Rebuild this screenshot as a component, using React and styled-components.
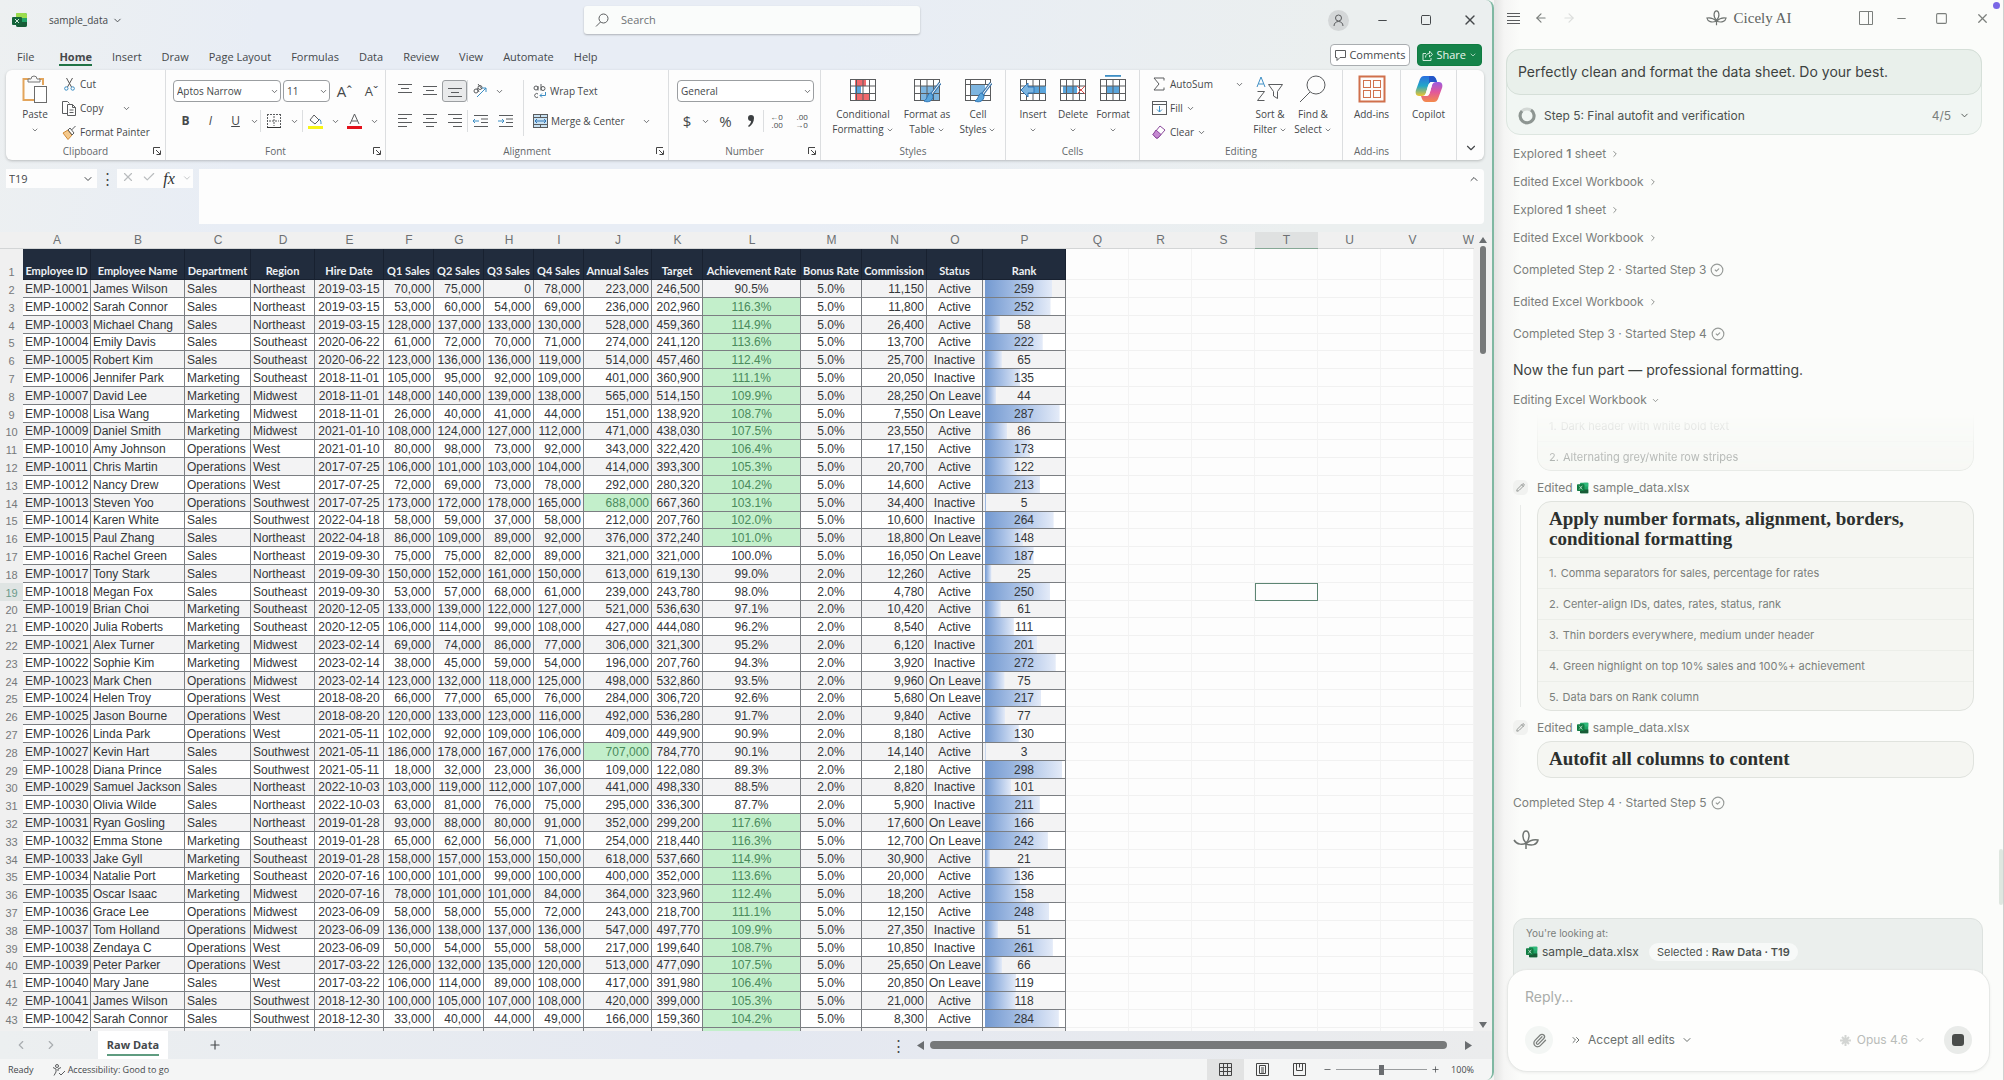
import React, { useState } from "react";
import styled, { createGlobalStyle, css } from "styled-components";
import {
  ArrowLeft,
  ArrowRight,
  Check,
  ChevronDown,
  ChevronLeft,
  ChevronRight,
  ChevronUp,
  ChevronsRight,
  CircleCheck,
  Minus,
  Paperclip,
  Pencil,
  Plus,
  Square,
  X
} from "lucide-react";

const GlobalStyle = createGlobalStyle`
  * {
    box-sizing: border-box;
  }

  body {
    margin: 0;
    background: #f4f4f3;
  }

  button, input, select, textarea {
    font: inherit;
    color: inherit;
    border: none;
    background: none;
    padding: 0;
    margin: 0;
    outline: none;
  }

  button {
    cursor: pointer;
  }
`;

/* ---------- data ---------- */

const COLUMNS = [
  { letter: "A", width: 68, title: "Employee ID" },
  { letter: "B", width: 94, title: "Employee Name" },
  { letter: "C", width: 66, title: "Department" },
  { letter: "D", width: 64, title: "Region" },
  { letter: "E", width: 69, title: "Hire Date" },
  { letter: "F", width: 50, title: "Q1 Sales" },
  { letter: "G", width: 50, title: "Q2 Sales" },
  { letter: "H", width: 50, title: "Q3 Sales" },
  { letter: "I", width: 50, title: "Q4 Sales" },
  { letter: "J", width: 68, title: "Annual Sales" },
  { letter: "K", width: 51, title: "Target" },
  { letter: "L", width: 98, title: "Achievement Rate" },
  { letter: "M", width: 61, title: "Bonus Rate" },
  { letter: "N", width: 65, title: "Commission" },
  { letter: "O", width: 56, title: "Status" },
  { letter: "P", width: 83, title: "Rank" },
  { letter: "Q", width: 63 },
  { letter: "R", width: 63 },
  { letter: "S", width: 63 },
  { letter: "T", width: 63 },
  { letter: "U", width: 63 },
  { letter: "V", width: 63 },
  { letter: "W" }
];

const EMPTY_COLUMNS = COLUMNS.filter((c) => !c.title);

// name, department, region, hire date, Q1-Q4 (thousands), target, achievement, bonus, status, rank
const EMPLOYEES = [
  ["James Wilson", "Sales", "Northeast", "2019-03-15", 70, 75, 0, 78, 246500, 90.5, 5, "Active", 259],
  ["Sarah Connor", "Sales", "Northeast", "2019-03-15", 53, 60, 54, 69, 202960, 116.3, 5, "Active", 252],
  ["Michael Chang", "Sales", "Northeast", "2019-03-15", 128, 137, 133, 130, 459360, 114.9, 5, "Active", 58],
  ["Emily Davis", "Sales", "Southeast", "2020-06-22", 61, 72, 70, 71, 241120, 113.6, 5, "Active", 222],
  ["Robert Kim", "Sales", "Southeast", "2020-06-22", 123, 136, 136, 119, 457460, 112.4, 5, "Inactive", 65],
  ["Jennifer Park", "Marketing", "Southeast", "2018-11-01", 105, 95, 92, 109, 360900, 111.1, 5, "Inactive", 135],
  ["David Lee", "Marketing", "Midwest", "2018-11-01", 148, 140, 139, 138, 514150, 109.9, 5, "On Leave", 44],
  ["Lisa Wang", "Marketing", "Midwest", "2018-11-01", 26, 40, 41, 44, 138920, 108.7, 5, "On Leave", 287],
  ["Daniel Smith", "Marketing", "Midwest", "2021-01-10", 108, 124, 127, 112, 438030, 107.5, 5, "Active", 86],
  ["Amy Johnson", "Operations", "West", "2021-01-10", 80, 98, 73, 92, 322420, 106.4, 5, "Active", 173],
  ["Chris Martin", "Operations", "West", "2017-07-25", 106, 101, 103, 104, 393300, 105.3, 5, "Active", 122],
  ["Nancy Drew", "Operations", "West", "2017-07-25", 72, 69, 73, 78, 280320, 104.2, 5, "Active", 213],
  ["Steven Yoo", "Operations", "Southwest", "2017-07-25", 173, 172, 178, 165, 667360, 103.1, 5, "Inactive", 5],
  ["Karen White", "Sales", "Southwest", "2022-04-18", 58, 59, 37, 58, 207760, 102.0, 5, "Inactive", 264],
  ["Paul Zhang", "Sales", "Northeast", "2022-04-18", 86, 109, 89, 92, 372240, 101.0, 5, "On Leave", 148],
  ["Rachel Green", "Sales", "Northeast", "2019-09-30", 75, 75, 82, 89, 321000, 100.0, 5, "On Leave", 187],
  ["Tony Stark", "Sales", "Northeast", "2019-09-30", 150, 152, 161, 150, 619130, 99.0, 2, "Active", 25],
  ["Megan Fox", "Sales", "Southeast", "2019-09-30", 53, 57, 68, 61, 243780, 98.0, 2, "Active", 250],
  ["Brian Choi", "Marketing", "Southeast", "2020-12-05", 133, 139, 122, 127, 536630, 97.1, 2, "Active", 61],
  ["Julia Roberts", "Marketing", "Southeast", "2020-12-05", 106, 114, 99, 108, 444080, 96.2, 2, "Active", 111],
  ["Alex Turner", "Marketing", "Midwest", "2023-02-14", 69, 74, 86, 77, 321300, 95.2, 2, "Inactive", 201],
  ["Sophie Kim", "Marketing", "Midwest", "2023-02-14", 38, 45, 59, 54, 207760, 94.3, 2, "Inactive", 272],
  ["Mark Chen", "Operations", "Midwest", "2023-02-14", 123, 132, 118, 125, 532860, 93.5, 2, "On Leave", 75],
  ["Helen Troy", "Operations", "West", "2018-08-20", 66, 77, 65, 76, 306720, 92.6, 2, "On Leave", 217],
  ["Jason Bourne", "Operations", "West", "2018-08-20", 120, 133, 123, 116, 536280, 91.7, 2, "Active", 77],
  ["Linda Park", "Operations", "West", "2021-05-11", 102, 92, 109, 106, 449900, 90.9, 2, "Active", 130],
  ["Kevin Hart", "Sales", "Southwest", "2021-05-11", 186, 178, 167, 176, 784770, 90.1, 2, "Active", 3],
  ["Diana Prince", "Sales", "Southwest", "2021-05-11", 18, 32, 23, 36, 122080, 89.3, 2, "Active", 298],
  ["Samuel Jackson", "Sales", "Northeast", "2022-10-03", 103, 119, 112, 107, 498330, 88.5, 2, "Inactive", 101],
  ["Olivia Wilde", "Sales", "Northeast", "2022-10-03", 63, 81, 76, 75, 336300, 87.7, 2, "Inactive", 211],
  ["Ryan Gosling", "Sales", "Northeast", "2019-01-28", 93, 88, 80, 91, 299200, 117.6, 5, "On Leave", 166],
  ["Emma Stone", "Marketing", "Southeast", "2019-01-28", 65, 62, 56, 71, 218440, 116.3, 5, "On Leave", 242],
  ["Jake Gyll", "Marketing", "Southeast", "2019-01-28", 158, 157, 153, 150, 537660, 114.9, 5, "Active", 21],
  ["Natalie Port", "Marketing", "Southeast", "2020-07-16", 100, 101, 99, 100, 352000, 113.6, 5, "Active", 136],
  ["Oscar Isaac", "Marketing", "Midwest", "2020-07-16", 78, 101, 101, 84, 323960, 112.4, 5, "Active", 158],
  ["Grace Lee", "Operations", "Midwest", "2023-06-09", 58, 58, 55, 72, 218700, 111.1, 5, "Active", 248],
  ["Tom Holland", "Operations", "Midwest", "2023-06-09", 136, 138, 137, 136, 497770, 109.9, 5, "Inactive", 51],
  ["Zendaya C", "Operations", "West", "2023-06-09", 50, 54, 55, 58, 199640, 108.7, 5, "Inactive", 261],
  ["Peter Parker", "Operations", "West", "2017-03-22", 126, 132, 135, 120, 477090, 107.5, 5, "On Leave", 66],
  ["Mary Jane", "Sales", "West", "2017-03-22", 106, 114, 89, 108, 391980, 106.4, 5, "On Leave", 119],
  ["James Wilson", "Sales", "Southwest", "2018-12-30", 100, 105, 107, 108, 399000, 105.3, 5, "Active", 118],
  ["Sarah Connor", "Sales", "Southwest", "2018-12-30", 33, 40, 44, 49, 159360, 104.2, 5, "Active", 284]
];

const TABS = [
  "File",
  "Home",
  "Insert",
  "Draw",
  "Page Layout",
  "Formulas",
  "Data",
  "Review",
  "View",
  "Automate",
  "Help"
];

const FORMAT_STEPS = [
  "Comma separators for sales, percentage for rates",
  "Center-align IDs, dates, rates, status, rank",
  "Thin borders everywhere, medium under header",
  "Green highlight on top 10% sales and 100%+ achievement",
  "Data bars on Rank column"
];

const money = (n) => n.toLocaleString("en-US");

/* ---------- icons ---------- */

const Svg = ({ w = 16, h, box, children, ...rest }) => (
  <svg
    width={w}
    height={h || w}
    viewBox={box || `0 0 ${w} ${h || w}`}
    fill="none"
    stroke="#5a5c5e"
    strokeWidth="1"
    aria-hidden="true"
    {...rest}
  >
    {children}
  </svg>
);

const Chev = ({ size = 9 }) => <ChevronDown size={size} strokeWidth={2} aria-hidden="true" />;

const ExcelLogo = ({ size = 16 }) => (
  <Svg w={size} box="0 0 16 16" stroke="none">
    <rect x="4" y="1" width="11" height="14" rx="2" fill="#21a366" />
    <path d="M5 1h8a2 2 0 0 1 2 2v3H4V2a1 1 0 0 1 1-1z" fill="#9bdc4e" />
    <path d="M4 10h11v3a2 2 0 0 1-2 2H6a2 2 0 0 1-2-2z" fill="#185c37" />
    <rect x="0" y="5" width="10" height="8" rx="1" fill="#14633a" />
    <path d="M3 7l4 4M7 7l-4 4" stroke="#cfe9da" strokeWidth="1" />
  </Svg>
);

const SheetFileIcon = () => (
  <Svg w={12} box="0 0 16 16" stroke="none">
    <rect x="4" y="1" width="11" height="14" rx="1" fill="#21a366" />
    <rect x="9" y="1" width="6" height="5" fill="#2fb87a" />
    <path d="M4 10h11v5H5a1 1 0 0 1-1-1z" fill="#185c37" />
    <rect x="0" y="3" width="10" height="9" rx="1" fill="#107c41" />
    <path d="M3 5l4 5M7 5l-4 5" stroke="#d5ecdf" strokeWidth="1" />
  </Svg>
);

const PasteIcon = () => (
  <Svg w={26} h={28}>
    <path d="M8 4H1.500v21H12M17 4h4v6" stroke="#e3a55c" strokeWidth="2" />
    <path d="M6 7V4h3a3 3 0 0 1 6 0h3v3z" fill="#f8f8f8" stroke="#777" />
    <rect x="12.500" y="11.500" width="12" height="16" fill="#fff" stroke="#6b6b6b" />
  </Svg>
);

const CutIcon = () => (
  <Svg w={12} h={14}>
    <path d="M3 1l5 9M9 1L4 10" stroke="#555" />
    <circle cx="2.800" cy="11.500" r="1.700" stroke="#3d8ec4" />
    <circle cx="9.200" cy="11.500" r="1.700" stroke="#3d8ec4" />
  </Svg>
);

const CopyIcon = () => (
  <Svg w={15} h={15}>
    <path d="M5 12.500H.5V.5h5l2 2" />
    <path d="M5.500 3.500h5l3 3v8h-8zM10.500 3.500v3h3M7.500 9h4M7.500 11.500h4" />
  </Svg>
);

const PainterIcon = () => (
  <Svg w={15} h={15}>
    <path d="M1 8l5-3 4 5-4 4.500z" fill="#f5c98c" stroke="#d08a35" />
    <path d="M6 5l2-2 4 5-2 2zM9.500 5l4-4" />
  </Svg>
);

const Lines = ({ rows, top = 2, step = 4 }) => (
  <Svg w={16} h={16}>
    {rows.map(([a, b], i) => (
      <path key={i} d={`M${a} ${top + i * step + 0.5}H${b}`} />
    ))}
  </Svg>
);

const OrientIcon = () => (
  <Svg w={17} h={16}>
    <circle cx="4" cy="8" r="2" />
    <circle cx="8" cy="4.500" r="2" />
    <path d="M5 5l2 4M6 1l4 5" />
    <path d="M5 14L14 5M14 9V5h-4" stroke="#3d8ec4" />
  </Svg>
);

const IndentIcon = ({ flip }) => (
  <Svg w={16} h={14}>
    <path d="M1 1.500h14M8 5h7M8 8.500h7M1 12.500h14" />
    <path d={flip ? "M0 7h6M4 5l2 2-2 2" : "M6 7H0M2 5L0 7l2 2"} stroke="#3d8ec4" />
  </Svg>
);

const WrapIcon = () => (
  <Svg w={14} h={15}>
    <circle cx="3" cy="4" r="2" />
    <path d="M5 2v4.500M8 0v6.500" />
    <circle cx="10" cy="4.500" r="2" />
    <path d="M5 10a2 2 0 1 0 0 3" />
    <path d="M12.500 8v3.500H7M9 9.500l-2 2 2 2" stroke="#3d8ec4" />
  </Svg>
);

const MergeIcon = () => (
  <Svg w={15} h={14}>
    <rect x=".5" y=".5" width="14" height="13" fill="#c9e2f3" />
    <path d="M.5 3.500h14M.5 10.500h14M7.500.500v3M7.500 10.500v3" />
    <path d="M2 7h11M4 5L2 7l2 2M11 5l2 2-2 2" stroke="#2e75b6" />
  </Svg>
);

const BordersIcon = () => (
  <Svg w={14} h={14}>
    <path d="M.5 0v13M13.500 0v13M0 .5h14M7 2v10M2 7h10" strokeDasharray="2 1" />
    <path d="M0 13.500h14" strokeWidth="1" stroke="#333" />
  </Svg>
);

const FillIcon = () => (
  <Svg w={15} h={16}>
    <path d="M6 2l5 5-4 4-5-4z" />
    <path d="M11 6c2 1 2 3 2 5" stroke="#3d8ec4" />
    <rect x="0" y="13" width="15" height="3" fill="#f7f516" stroke="none" />
  </Svg>
);

const TableGlyph = ({ kind }) => (
  <Svg w={28} h={28}>
    {kind === "format" && <path d="M6 .8h16" stroke="#3d8ec4" strokeWidth="2" />}
    <rect x="1.500" y="4.500" width="25" height="21" fill="#fff" />
    {kind === "conditional" && (
      <g stroke="none">
        <rect x="6" y="5" width="11" height="6" fill="#f0696c" />
        <rect x="6" y="11" width="6" height="7" fill="#5aa5dc" />
        <rect x="6" y="18" width="14" height="7" fill="#f0696c" />
      </g>
    )}
    {kind === "table" && <rect x="8" y="11" width="18" height="14" fill="#7db5e0" stroke="none" />}
    {kind === "cell" && <rect x="7" y="10" width="14" height="10" fill="#7db5e0" stroke="none" />}
    {kind === "insert" && <rect x="8" y="11" width="19" height="8" fill="#5aa5dc" stroke="none" />}
    {kind === "delete" && <rect x="4" y="11" width="14" height="8" fill="#5aa5dc" stroke="none" />}
    {kind === "format" && <rect x="7" y="11" width="14" height="8" fill="#5aa5dc" stroke="none" />}
    <path
      d={
        kind === "cell"
          ? "M1.500 9.500h25M6.500 4.500v21M1.500 20.500h25M21.500 4.500v5"
          : "M1.500 11h25M1.500 18.500h25M7.500 4.500v21M14 4.500v21M20.500 4.500v21"
      }
      strokeWidth="1"
    />
    {(kind === "table" || kind === "cell") && (
      <g>
        <path d="M27 8L18 20" stroke="#3f78ad" strokeWidth="3" />
        <path d="M27 8L18 20" stroke="#fff" strokeWidth="1" />
        <path d="M18 18c-4 0-3 6-7 8 4 2 9 0 9-5z" fill="#5aa5dc" stroke="#2e75b6" />
      </g>
    )}
    {kind === "insert" && (
      <path d="M9 8l-7 7 7 7v-4h6v-6H9z" fill="#7db5e0" stroke="#2e75b6" />
    )}
    {kind === "delete" && <path d="M18 11l8 8M26 11l-8 8" stroke="#d9534f" strokeWidth="1" />}
  </Svg>
);

const SortIcon = () => (
  <Svg w={28} h={28}>
    <path d="M1 12L5 2l4 10M2.500 9h5" stroke="#3d8ec4" strokeWidth="1" />
    <path d="M1.500 16.500h7l-7 9h7" strokeWidth="1" />
    <path d="M12.500 9.500h14l-5 7v7l-4-2.500v-4.500z" strokeWidth="1" />
  </Svg>
);

const FindIcon = () => (
  <Svg w={28} h={28}>
    <circle cx="17" cy="10" r="9" />
    <path d="M11 17L1 27" />
  </Svg>
);

const AddinsIcon = () => (
  <Svg w={28} h={28} stroke="#d0704c">
    <rect x="1.500" y="1.500" width="25" height="25" strokeWidth="2" />
    <rect x="5.500" y="5.500" width="7" height="7" />
    <rect x="15.500" y="5.500" width="7" height="7" />
    <rect x="5.500" y="15.500" width="7" height="7" />
    <rect x="15.500" y="15.500" width="7" height="7" />
  </Svg>
);

const CopilotIcon = () => (
  <Svg w={28} h={28} stroke="none">
    <defs>
      <linearGradient id="cpA" x1="0" y1="0" x2="0" y2="1">
        <stop offset="0" stopColor="#2a6fe0" />
        <stop offset=".5" stopColor="#22a7c8" />
        <stop offset="1" stopColor="#f0c52c" />
      </linearGradient>
      <linearGradient id="cpB" x1="0" y1="0" x2="0" y2="1">
        <stop offset="0" stopColor="#9a5be0" />
        <stop offset=".5" stopColor="#e2579b" />
        <stop offset="1" stopColor="#f48a4a" />
      </linearGradient>
    </defs>
    <path d="M9 1h8c2 0 3 1 4 3l1 3h-5c-2 0-3 1-4 4l-2 7c-1 2-2 3-4 3H4c-3 0-4-3-3-6L5 4c1-2 2-3 4-3z" fill="url(#cpA)" />
    <path d="M19 27h-8c-2 0-3-1-4-3l-1-3h5c2 0 3-1 4-4l2-7c1-2 2-3 4-3h3c3 0 4 3 3 6l-4 11c-1 2-2 3-4 3z" fill="url(#cpB)" />
    <path d="M14 1h3c2 0 3 1 4 3l1 3h-5c-1 0-2 0-3 2z" fill="#2456c8" />
    <path d="M17 7h-1c-1 0-2 2-3 4l-3 10h1c2 0 3-1 4-4l2-7z" fill="#fdfdfd" />
  </Svg>
);

const LauncherIcon = () => (
  <Svg w={8} h={8}>
    <path d="M.5 7V.5H7M3 3l4 4M7.500 3.500v4h-4" stroke="#444" />
  </Svg>
);

const CicelyMark = ({ w = 21, h = 16, open }) => (
  <Svg w={w} h={h} box="0 0 26 20" stroke="#6f7471" strokeWidth="1.500">
    <path d="M13 13C8 8 10 1 13 1s5 7 0 12zM13 12v7" />
    <path d={open ? "M1 10c3 5 9 5 12 3" : "M13 14C7 16 2 15 1 10c5-1 9 1 12 4z"} />
    <path d="M13 14c6 2 11 1 12-4-5-1-9 1-12 4z" />
  </Svg>
);

/* ---------- workbook window ---------- */

const Desktop = styled.div`
  display: grid;
  grid-template-columns: minmax(0, 1fr) 510px;
  height: 100vh;
  overflow: hidden;
`;

const Workbook = styled.main`
  display: flex;
  flex-direction: column;
  min-width: 0;
  min-height: 0;
  border-right: 2px solid #7fb8a2;
  border-radius: 0 8px 8px 0;
  background: linear-gradient(100deg, #edf0f1 0, #e8edf5 260px, #e8edf5 50%, #ebefef 80%);
  font-family: "Open Sans", "Noto Sans", sans-serif;
  font-size: 10px;
  line-height: 14px;
  color: #45484b;
  overflow: hidden;
`;

const TitleBar = styled.header`
  display: grid;
  grid-template-columns: 1fr 336px 1fr;
  align-items: center;
  height: 40px;
  padding-left: 12px;
`;

const FileName = styled.button`
  display: flex;
  align-items: center;
  gap: 4px;
`;

const FileGroup = styled.div`
  display: flex;
  align-items: center;
  gap: 21px;
`;

const SearchBox = styled.label`
  display: flex;
  align-items: center;
  gap: 12px;
  height: 28px;
  padding: 0 11px;
  background: #fafcfb;
  border-radius: 3px;
  box-shadow: 0 1px 2px rgba(0, 0, 0, 0.25);
  font-size: 11px;

  input {
    flex: 1;
    min-width: 0;
  }

  input::placeholder {
    color: #6f7376;
    opacity: 1;
  }
`;

const WindowButtons = styled.div`
  display: flex;
  justify-content: flex-end;
  align-items: center;

  button {
    display: grid;
    place-items: center;
    width: 44px;
    height: 28px;
  }
`;

const Avatar = styled.span`
  display: grid;
  place-items: center;
  width: 21px;
  height: 21px;
  border-radius: 50%;
  background: #d4d7d8;
`;

const TabBar = styled.nav`
  display: flex;
  align-items: center;
  height: 30px;
  padding: 0 10px 0 7px;
  font-size: 11px;
`;

const Tab = styled.button`
  padding: 2px 0 0;
  margin: 3px 10px 0;
  border-bottom: 2px solid ${({ $active }) => ($active ? "#217346" : "transparent")};
  font-weight: ${({ $active }) => ($active ? 700 : 400)};

  &:first-child {
    margin-right: 15px;
  }
`;

const TabActions = styled.div`
  display: flex;
  gap: 7px;
  margin-left: auto;
`;

const ActionButton = styled.button`
  display: flex;
  align-items: center;
  gap: 3px;
  height: 22px;
  padding: 0 4px;
  border-radius: 4px;
  border: 1px solid ${({ $primary }) => ($primary ? "#107c41" : "#a9adb0")};
  background: ${({ $primary }) => ($primary ? "#15834a" : "#fff")};
  color: ${({ $primary }) => ($primary ? "#e9f6ee" : "#45484b")};
`;

const Ribbon = styled.section`
  display: flex;
  height: 90px;
  margin: 0 8px 0 6px;
  background: #fdfdfd;
  border-radius: 6px;
  box-shadow: 0 1px 3px rgba(0, 0, 0, 0.22);
`;

const Group = styled.div`
  display: flex;
  flex-direction: column;
  flex: none;
  width: ${({ $width }) => $width}px;
  border-right: 1px solid #dcdee0;
`;

const GroupBody = styled.div`
  display: flex;
  flex: 1;
  min-height: 0;
  padding: ${({ $pad }) => $pad || "0"};
`;

const GroupFooter = styled.div`
  display: grid;
  grid-template-columns: 16px minmax(0, 1fr) 16px;
  align-items: center;
  justify-items: center;
  height: 17px;
  margin-bottom: 1px;
  color: #63676a;
  white-space: nowrap;

  span {
    grid-column: 1 / -1;
    grid-row: 1;
  }

  button {
    grid-column: 3;
    grid-row: 1;
    line-height: 0;
  }
`;

const Stack = styled.div`
  display: flex;
  flex-direction: column;
  gap: 8px;
`;

const ToolRow = styled.div`
  display: flex;
  align-items: center;
  height: 22px;
  gap: ${({ $gap }) => $gap || 0}px;
`;

const ToolButton = styled.button`
  display: grid;
  place-items: center;
  flex: none;
  width: ${({ $width }) => $width || 25}px;
  height: 22px;
  font-size: ${({ $size }) => $size || 10}px;
  border-radius: 3px;
  ${({ $on }) =>
    $on &&
    css`
      border: 1px solid #9b9ea1;
      background: #e9eaeb;
    `}
`;

const TextButton = styled.button`
  display: flex;
  align-items: center;
  gap: 3px;
  height: 16px;
  white-space: nowrap;
`;

const BigButton = styled.button`
  display: flex;
  flex-direction: column;
  align-items: center;
  flex: none;
  width: ${({ $width }) => $width}px;
  padding-top: 5px;
  line-height: 15px;

  svg:first-child {
    margin-bottom: 4px;
  }

  span {
    display: flex;
    align-items: center;
    gap: 2px;
    min-height: 15px;
    white-space: nowrap;
  }

  span svg:first-child {
    margin-bottom: 0;
  }
`;

const Divider = styled.span`
  flex: none;
  width: 1px;
  height: 22px;
  background: #dcdee0;
`;

const SelectWrap = styled.span`
  position: relative;
  display: flex;
  width: ${({ $width }) => $width}px;

  select {
    appearance: none;
    width: 100%;
    height: 22px;
    padding: 0 3px;
    border: 1px solid #9b9ea1;
    border-radius: 4px;
    background: #fff;
  }

  svg {
    position: absolute;
    right: 2px;
    top: 7px;
    pointer-events: none;
  }
`;

const ClipboardTools = styled.div`
  display: flex;
  flex-direction: column;
  gap: 8px;
  padding-top: 6px;

  svg:first-child {
    width: 15px;
  }

  svg + svg {
    margin-left: 16px;
  }
`;

const EditingTools = styled(ClipboardTools)`
  width: 98px;

  svg + svg {
    margin-left: 0;
  }

  svg.far {
    margin-left: 19px;
  }
`;

const WrapTools = styled.div`
  display: flex;
  flex-direction: column;
  gap: 14px;
  height: 56px;
  margin-left: 5px;
  padding: 3px 0 0 9px;
  border-left: 1px solid #dcdee0;

  svg + svg {
    margin-left: 14px;
  }
`;

const DecimalGlyph = styled.span`
  font-size: 8px;
  line-height: 8px;
  text-align: right;
`;

const CollapseRibbon = styled.button`
  align-self: flex-end;
  margin-left: 7px;
  padding-bottom: 5px;
  line-height: 0;
`;

const FormulaRow = styled.section`
  display: flex;
  align-items: flex-start;
  height: 63px;
  margin: 9px 8px 0 6px;
`;

const NameBox = styled.div`
  display: flex;
  align-items: center;
  width: 91px;
  height: 19px;
  padding: 0 3px;
  background: #fdfdfd;
  font-size: 11px;

  input {
    flex: 1;
    min-width: 0;
  }

  button {
    line-height: 0;
  }
`;

const FxButtons = styled.div`
  display: flex;
  align-items: center;
  justify-content: space-between;
  width: 76px;
  height: 19px;
  padding: 0 1px 0 4px;
  background: #fdfdfd;
  color: #b9bcbe;

  button {
    line-height: 16px;
  }

  .fx {
    font: italic 16px "Liberation Serif", serif;
    color: #2f3234;
  }
`;

const Dots = styled.span`
  width: 20px;
  text-align: center;
  font-size: 15px;
  line-height: 19px;
`;

const FormulaBox = styled.div`
  display: flex;
  flex: 1;
  height: 55px;
  margin-left: 6px;
  padding: 4px;
  background: #fdfdfd;
  border-radius: 0 4px 4px 0;

  textarea {
    flex: 1;
    resize: none;
  }

  button {
    align-self: flex-start;
    line-height: 0;
  }
`;

const SheetArea = styled.section`
  display: flex;
  flex: 1;
  min-height: 0;
  background: #f0f0f0;
`;

const SheetClip = styled.div`
  flex: 1;
  min-width: 0;
  overflow: hidden;
`;

const Sheet = styled.table`
  table-layout: fixed;
  width: 100%;
  border-collapse: separate;
  border-spacing: 0;
  font-family: "Liberation Sans", Arial, sans-serif;
  font-size: 12px;
  line-height: 16px;
  color: #333639;

  th,
  td {
    padding: 0;
    white-space: nowrap;
    overflow: hidden;
  }

  tbody tr {
    height: 18px;
  }

  tbody tr:nth-child(5n) {
    height: 17px;
  }

  tbody tr:first-child {
    height: 31px;
  }
`;

const ColumnLetter = styled.th`
  height: 17px;
  font-weight: 400;
  color: #6d7073;
  background: ${({ $on }) => ($on ? "#dfe1e1" : "#f0f0f0")};
  border-bottom: 1px solid ${({ $on }) => ($on ? "#86a896" : "#d3d5d6")};

  &:last-child {
    text-align: right;
  }
`;

const RowNumber = styled.th`
  font-size: 11px;
  font-weight: 400;
  color: ${({ $on }) => ($on ? "#6b9a8a" : "#76797b")};
  background: ${({ $on }) => ($on ? "#dfe4e3" : "#f0f0f0")};
  vertical-align: bottom;
`;

const TitleCell = styled.th`
  vertical-align: bottom;
  background: #212c3d;
  border-right: 1px solid #182130;
  border-bottom: 1px solid #182130;
  color: #eef1f4;
  font-family: Lato, sans-serif;
  font-size: 11px;
  font-weight: 700;
  text-align: center;
`;

const Cell = styled.td`
  && {
    padding: 0 2px;
  }
  text-align: ${({ $align }) => $align || "left"};
  background-color: ${({ $good, $stripe }) =>
    $good ? "#c3efcb" : $stripe ? "#f3f3f4" : "#fff"};
  color: ${({ $good }) => ($good ? "#4a8a5c" : "inherit")};
  border-right: 1px solid #7b7e82;
  border-bottom: 1px solid #7b7e82;
`;

const RankCell = styled(Cell)`
  background-image: linear-gradient(90deg, #7399d0, #a9c1e6 50%, #e4ebf8);
  background-repeat: no-repeat;
  background-origin: content-box;
`;

const EmptyCell = styled.td`
  background: #fdfdfd;
  border-right: 1px solid #f3f3f3;
  border-bottom: 1px solid #f1f1f1;
  ${({ $on }) =>
    $on &&
    css`
      outline: 1px solid #5d8573;
      outline-offset: -1px;
    `}
`;

const VScroll = styled.div`
  display: flex;
  flex-direction: column;
  align-items: center;
  width: 18px;
  padding: 4px 0 2px;
  background: #f0f0f0;

  i {
    width: 6px;
    height: 108px;
    margin-top: 2px;
    border-radius: 3px;
    background: #77797a;
  }

  svg:last-child {
    margin-top: auto;
  }
`;

const SheetTabs = styled.section`
  display: flex;
  align-items: center;
  height: 28px;
  padding: 0 20px 0 14px;
  background: linear-gradient(90deg, #eceff0, #e4e8f1 50%, #ebeced);
`;

const SheetNav = styled.div`
  display: flex;
  gap: 16px;
  width: 84px;
  color: #a9adb0;

  button {
    line-height: 0;
  }
`;

const SheetTab = styled.button`
  align-self: stretch;
  width: 70px;
  background: #fff;
  font-size: 11px;
  font-weight: 700;

  span {
    padding-bottom: 2px;
    border-bottom: 2px solid #5f9c80;
  }
`;

const AddSheet = styled.button`
  margin-left: 40px;
  line-height: 0;
`;

const HScroll = styled.div`
  display: flex;
  align-items: center;
  gap: 6px;
  width: 584px;
  margin-left: auto;

  ${Dots} {
    margin-right: 3px;
  }

  b {
    flex: 1;
    height: 8px;
    border-radius: 4px;
    background: #77797a;
  }

  b + svg {
    margin-left: 12px;
  }
`;

const StatusBar = styled.footer`
  display: flex;
  align-items: center;
  height: 21px;
  padding: 0 18px 0 8px;
  background: #f4f5f5;
  font-size: 9px;

  .access {
    display: flex;
    align-items: center;
    gap: 3px;
    margin: 0 auto 0 18px;
  }
`;

const ViewButton = styled.button`
  display: grid;
  place-items: center;
  width: 37px;
  height: 21px;
  background: ${({ $on }) => ($on ? "#e2e3e3" : "transparent")};
`;

const Zoom = styled.label`
  display: flex;
  align-items: center;
  gap: 4px;
  margin: 0 11px 0 5px;

  input {
    appearance: none;
    width: 91px;
    height: 1px;
    background: #9a9d9f;
  }

  input::-webkit-slider-thumb {
    appearance: none;
    width: 5px;
    height: 10px;
    background: #6a6d70;
  }
`;

/* ---------- assistant panel ---------- */

const Panel = styled.aside`
  display: flex;
  flex-direction: column;
  min-height: 0;
  border-right: 1px solid #cfd1d0;
  background: linear-gradient(90deg, #e3e3e2 0, #f5f5f4 10px, #fbfcfa 26px);
  font-family: Inter, sans-serif;
  font-size: 12px;
  line-height: 16px;
  color: #7b7f7c;
`;

const PanelBar = styled.header`
  position: relative;
  display: grid;
  grid-template-columns: 1fr auto 1fr;
  align-items: center;
  height: 38px;
  padding: 0 13px 2px;

  button {
    line-height: 0;
  }
`;

const PanelTools = styled.div`
  display: flex;
  align-items: center;
  gap: 14px;
`;

const PanelWindowButtons = styled.div`
  display: flex;
  align-items: center;
  justify-content: flex-end;
  gap: 27px;

  button:first-child {
    margin-right: -5px;
  }
`;

const Brand = styled.div`
  display: flex;
  align-items: center;
  gap: 7px;
  font-family: "Liberation Serif", serif;
  font-size: 15px;
  color: #5e6360;
`;

const RecordDot = styled.span`
  position: absolute;
  top: 2px;
  right: 3px;
  width: 7px;
  height: 7px;
  border-radius: 50%;
  background: #7a67e6;
`;

const TaskCard = styled.section`
  margin: 11px 21px 0 12px;
  border: 1px solid #dde6e0;
  border-radius: 14px;
  background: #f1f6f3;
`;

const Prompt = styled.p`
  margin: -1px;
  padding: 12px 11px;
  border: 1px solid #d5dfd8;
  border-radius: 14px;
  background: #e9f0eb;
  font-size: 14px;
  line-height: 20px;
  color: #3d423f;
`;

const StepRow = styled.button`
  display: flex;
  align-items: center;
  gap: 8px;
  width: 100%;
  height: 40px;
  padding: 3px 11px 0;
  color: #4c514e;

  .count {
    margin-left: auto;
    color: #7b7f7c;
  }
`;

const Feed = styled.div`
  display: flex;
  flex: 1;
  flex-direction: column;
  min-height: 0;
  padding: 5px 29px 0 19px;
  overflow: hidden;

  > div + button {
    margin-top: 7px;
  }
`;

const FeedItem = styled.button`
  display: flex;
  align-items: center;
  align-self: flex-start;
  gap: 4px;
  height: ${({ $tall }) => ($tall ? 36 : 28)}px;
  flex: none;

  strong {
    font-weight: 600;
  }
`;

const Message = styled.p`
  margin: 8px 0 6px;
  font-size: 14px;
  line-height: 20px;
  color: #3d423f;
`;

const EditBlock = styled.div`
  display: grid;
  flex: none;
  grid-template-columns: 15px minmax(0, 1fr);
  column-gap: 9px;
  justify-items: center;
`;

const EditLabel = styled.div`
  display: flex;
  align-items: center;
  justify-self: start;
  gap: 4px;
  height: 30px;
  padding-top: 4px;
`;

const PenBadge = styled.span`
  display: grid;
  place-items: center;
  align-self: center;
  width: 15px;
  height: 15px;
  margin-top: 3px;
  border-radius: 5px;
  background: #f1f2f0;
`;

const Rail = styled.span`
  width: 1px;
  margin: 4px 0;
  background: #e9ebe9;
`;

const EditCard = styled.div`
  grid-column: 2;
  width: 100%;
  border: 1px solid #e0e3de;
  border-radius: 14px;
  background: #f5f6f2;
  overflow: hidden;

  h3 {
    margin: 0;
    padding: 7px 11px 8px;
    font-family: "Liberation Serif", serif;
    font-size: 19px;
    font-weight: 700;
    line-height: 20px;
    color: #2c302e;
  }

  ol {
    margin: 0;
    padding: 0;
    list-style: none;
  }

  li {
    display: flex;
    gap: 4px;
    height: 31px;
    padding: 7px 11px;
    border-top: 1px solid #eceee9;
    font-size: 11px;
  }

  li:last-child {
    height: 29px;
  }
`;

const FadedCard = styled(EditCard)`
  height: 57px;
  border-top: none;
  border-radius: 0 0 14px 14px;
  -webkit-mask-image: linear-gradient(transparent, rgba(0, 0, 0, 0.7));
  mask-image: linear-gradient(transparent, rgba(0, 0, 0, 0.7));

  ol {
    margin-top: -4px;
  }
`;

const Thinking = styled.div`
  padding: 9px 0;
`;

const Composer = styled.section`
  padding: 0 13px 8px;
`;

const Context = styled.div`
  margin: 0 7px 0 6px;
  padding: 6px 12px 22px;
  border: 1px solid #dde2df;
  border-radius: 12px 12px 0 0;
  background: #ebefed;
  font-size: 10px;

  div {
    display: flex;
    align-items: center;
    gap: 4px;
    margin-top: 2px;
    font-size: 12px;
    color: #4c514e;
  }

  .pill {
    margin-left: 6px;
    padding: 1px 8px;
    border-radius: 9px;
    background: #f7f9f8;
    font-size: 11px;
  }

  .pill strong {
    font-weight: 600;
  }
`;

const ReplyCard = styled.form`
  margin-top: -15px;
  padding: 14px 17px;
  border: 1px solid #e6e8e6;
  border-radius: 20px;
  background: #fefefd;
  box-shadow: 0 1px 3px rgba(0, 0, 0, 0.06);

  textarea {
    display: block;
    width: 100%;
    height: 39px;
    resize: none;
    font-size: 14px;
    line-height: 26px;
  }

  textarea::placeholder {
    color: #a9aca9;
    opacity: 1;
  }
`;

const ReplyTools = styled.div`
  display: flex;
  align-items: center;
  height: 34px;
`;

const RoundButton = styled.button`
  display: grid;
  place-items: center;
  width: 28px;
  height: 28px;
  border-radius: 50%;
  background: ${({ $dark }) => ($dark ? "#e9ebe9" : "#f3f6f4")};

  i {
    width: 12px;
    height: 12px;
    border-radius: 3px;
    background: #4a4d4b;
  }
`;

const ModeButton = styled.button`
  display: flex;
  align-items: center;
  gap: 6px;
  margin-left: ${({ $push }) => ($push ? "auto" : "17px")};
  margin-right: ${({ $push }) => ($push ? "18px" : "0")};
  color: ${({ $push }) => ($push ? "#b9bcb9" : "#6b706d")};
`;

const PanelScroll = styled.i`
  position: absolute;
  right: 0;
  top: 849px;
  width: 4px;
  height: 56px;
  border-radius: 2px;
  background: #dfe7e0;
`;

/* ---------- parts ---------- */

const RibbonGroup = ({ label, width, launcher, pad, children }) => (
  <Group $width={width}>
    <GroupBody $pad={pad}>{children}</GroupBody>
    <GroupFooter>
      <span>{label}</span>
      {launcher && (
        <button type="button" aria-label={`${label} settings`}>
          <LauncherIcon />
        </button>
      )}
    </GroupFooter>
  </Group>
);

const Big = ({ width, icon, top, bottom, chevron }) => (
  <BigButton type="button" $width={width}>
    {icon}
    <span>{top}</span>
    {(bottom || chevron) && (
      <span>
        {bottom}
        <Chev size={8} />
      </span>
    )}
  </BigButton>
);

const Tool = ({ label, children, ...rest }) => (
  <ToolButton type="button" aria-label={label} {...rest}>
    {children}
  </ToolButton>
);

const RibbonBar = () => (
  <Ribbon>
    <RibbonGroup label="Clipboard" width={160} pad="0 0 0 2px" launcher>
      <Big width={54} icon={<PasteIcon />} top="Paste" chevron />
      <ClipboardTools>
        <TextButton type="button">
          <CutIcon />
          Cut
        </TextButton>
        <TextButton type="button">
          <CopyIcon />
          Copy
          <Chev />
        </TextButton>
        <TextButton type="button">
          <PainterIcon />
          Format Painter
        </TextButton>
      </ClipboardTools>
    </RibbonGroup>

    <RibbonGroup label="Font" width={220} pad="10px 6px 0 7px" launcher>
      <Stack>
        <ToolRow $gap={2}>
          <SelectWrap $width={108}>
            <select aria-label="Font" defaultValue="Aptos Narrow">
              <option>Aptos Narrow</option>
            </select>
            <Chev />
          </SelectWrap>
          <SelectWrap $width={47}>
            <select aria-label="Font size" defaultValue="11">
              <option>11</option>
            </select>
            <Chev />
          </SelectWrap>
          <Tool label="Increase font size" $size={15}>A&#x02C6;</Tool>
          <Tool label="Decrease font size" $size={13}>A&#x02C7;</Tool>
        </ToolRow>
        <ToolRow>
          <Tool label="Bold" $size={12}><b>B</b></Tool>
          <Tool label="Italic" $size={12}><i>I</i></Tool>
          <Tool label="Underline" $size={12}><u>U</u></Tool>
          <Tool label="Underline options" $width={12}><Chev /></Tool>
          <Divider />
          <Tool label="Borders"><BordersIcon /></Tool>
          <Tool label="Border options" $width={16}><Chev /></Tool>
          <Divider />
          <Tool label="Fill colour"><FillIcon /></Tool>
          <Tool label="Fill options" $width={14}><Chev /></Tool>
          <Tool label="Font colour">
            <Svg w={15} h={16}>
              <path d="M3 11L7.500 1 12 11M4.500 8h6" />
              <rect x="0" y="13" width="15" height="3" fill="#e3121c" stroke="none" />
            </Svg>
          </Tool>
          <Tool label="Font colour options" $width={14}><Chev /></Tool>
        </ToolRow>
      </Stack>
    </RibbonGroup>

    <RibbonGroup label="Alignment" width={283} pad="10px 6px 0" launcher>
      <Stack>
        <ToolRow>
          <Tool label="Top align"><Lines rows={[[1, 15], [4, 12], [1, 15]]} top={1} /></Tool>
          <Tool label="Middle align"><Lines rows={[[1, 15], [4, 12], [1, 15]]} top={3} /></Tool>
          <Tool label="Bottom align" $on><Lines rows={[[1, 15], [4, 12], [1, 15]]} top={5} /></Tool>
          <Divider />
          <Tool label="Orientation"><OrientIcon /></Tool>
          <Tool label="Orientation options" $width={12}><Chev /></Tool>
        </ToolRow>
        <ToolRow>
          <Tool label="Align left"><Lines rows={[[1, 15], [1, 10], [1, 15], [1, 10]]} top={1} /></Tool>
          <Tool label="Center"><Lines rows={[[1, 15], [4, 12], [1, 15], [4, 12]]} top={1} /></Tool>
          <Tool label="Align right"><Lines rows={[[1, 15], [6, 15], [1, 15], [6, 15]]} top={1} /></Tool>
          <Divider />
          <Tool label="Decrease indent"><IndentIcon /></Tool>
          <Tool label="Increase indent"><IndentIcon flip /></Tool>
        </ToolRow>
      </Stack>
      <WrapTools>
        <TextButton type="button">
          <WrapIcon />
          Wrap Text
        </TextButton>
        <TextButton type="button">
          <MergeIcon />
          Merge &amp; Center
          <Chev />
        </TextButton>
      </WrapTools>
    </RibbonGroup>

    <RibbonGroup label="Number" width={152} pad="10px 6px 0 8px" launcher>
      <Stack>
        <SelectWrap $width={137}>
          <select aria-label="Number format" defaultValue="General">
            <option>General</option>
          </select>
          <Chev />
        </SelectWrap>
        <ToolRow>
          <Tool label="Currency" $width={20} $size={15}>$</Tool>
          <Tool label="Currency options" $width={16}><Chev /></Tool>
          <Tool label="Percent" $size={15}>%</Tool>
          <Tool label="Comma style">
            <Svg w={8} h={12} stroke="none">
              <path d="M4 0a3 3 0 0 1 3 3c0 4-2 7-5 9l-1-1c2-2 3-3 3-5a3 3 0 0 1 0-6z" fill="#3c3f41" />
            </Svg>
          </Tool>
          <Divider />
          <Tool label="Increase decimal"><DecimalGlyph>←0<br />.00</DecimalGlyph></Tool>
          <Tool label="Decrease decimal"><DecimalGlyph>.00<br />→0</DecimalGlyph></Tool>
        </ToolRow>
      </Stack>
    </RibbonGroup>

    <RibbonGroup label="Styles" width={185} pad="0 4px">
      <Big width={76} icon={<TableGlyph kind="conditional" />} top="Conditional" bottom="Formatting" />
      <Big width={52} icon={<TableGlyph kind="table" />} top="Format as" bottom="Table" />
      <Big width={50} icon={<TableGlyph kind="cell" />} top="Cell" bottom="Styles" />
    </RibbonGroup>

    <RibbonGroup label="Cells" width={134} pad="0 7px">
      <Big width={40} icon={<TableGlyph kind="insert" />} top="Insert" chevron />
      <Big width={40} icon={<TableGlyph kind="delete" />} top="Delete" chevron />
      <Big width={40} icon={<TableGlyph kind="format" />} top="Format" chevron />
    </RibbonGroup>

    <RibbonGroup label="Editing" width={203} pad="0 0 0 12px">
      <EditingTools>
        <TextButton type="button">
          <Svg w={15} h={14}>
            <path d="M12 3.500V1H2l5 6-5 6h10v-2.500" />
          </Svg>
          AutoSum
          <ChevronDown className="far" size={9} />
        </TextButton>
        <TextButton type="button">
          <Svg w={15} h={14}>
            <rect x=".5" y=".5" width="14" height="13" />
            <path d="M.5 3.500h14" />
            <path d="M7.500 5v6M5 8.500l2.500 2.500L10 8.500" stroke="#3d8ec4" />
          </Svg>
          Fill
          <Chev />
        </TextButton>
        <TextButton type="button">
          <Svg w={15} h={14}>
            <path d="M8 1l5 4-7 8H4L1 9.500z" fill="#fff" stroke="#8b4a9c" />
            <path d="M4 5l5 4.500L6 13H4L1 9.500z" fill="#c58ad2" stroke="#8b4a9c" />
          </Svg>
          Clear
          <Chev />
        </TextButton>
      </EditingTools>
      <Big width={40} icon={<SortIcon />} top="Sort &amp;" bottom="Filter" />
      <Big width={46} icon={<FindIcon />} top="Find &amp;" bottom="Select" />
    </RibbonGroup>

    <RibbonGroup label="Add-ins" width={58}>
      <Big width={57} icon={<AddinsIcon />} top="Add-ins" />
    </RibbonGroup>
    <RibbonGroup width={56}>
      <Big width={55} icon={<CopilotIcon />} top="Copilot" />
    </RibbonGroup>
    <CollapseRibbon type="button" aria-label="Collapse ribbon">
      <ChevronDown size={14} strokeWidth={2} />
    </CollapseRibbon>
  </Ribbon>
);

const HeaderRow = () => (
  <tr>
    <RowNumber scope="row">1</RowNumber>
    {COLUMNS.map(({ letter, title }) =>
      title ? (
        <TitleCell key={letter} scope="col">{title}</TitleCell>
      ) : (
        <EmptyCell key={letter} />
      )
    )}
  </tr>
);

const EmployeeRow = ({ row, data, selected }) => {
  const [name, dept, region, date, q1, q2, q3, q4, target, rate, bonus, status, rank] = data;
  const annual = (q1 + q2 + q3 + q4) * 1000;
  const stripe = row % 2 === 0;

  return (
    <tr>
      <RowNumber scope="row" $on={selected}>{row}</RowNumber>
      <Cell $stripe={stripe} $align="center">EMP-{10000 + row - 1}</Cell>
      <Cell $stripe={stripe}>{name}</Cell>
      <Cell $stripe={stripe}>{dept}</Cell>
      <Cell $stripe={stripe}>{region}</Cell>
      <Cell $stripe={stripe} $align="center">{date}</Cell>
      {[q1, q2, q3, q4].map((q, i) => (
        <Cell key={i} $stripe={stripe} $align="right">{money(q * 1000)}</Cell>
      ))}
      <Cell $stripe={stripe} $align="right" $good={annual > 650000}>{money(annual)}</Cell>
      <Cell $stripe={stripe} $align="right">{money(target)}</Cell>
      <Cell $stripe={stripe} $align="center" $good={rate > 100}>{rate.toFixed(1)}%</Cell>
      <Cell $stripe={stripe} $align="center">{bonus.toFixed(1)}%</Cell>
      <Cell $stripe={stripe} $align="right">{money((annual * bonus) / 100)}</Cell>
      <Cell $stripe={stripe} $align="center">{status}</Cell>
      <RankCell
        $stripe={stripe}
        $align="center"
        style={{ backgroundSize: `${(rank / 300) * 100}% 100%` }}
      >
        {rank}
      </RankCell>
      {EMPTY_COLUMNS.map(({ letter }) => (
        <EmptyCell key={letter} $on={selected && letter === "T"} />
      ))}
    </tr>
  );
};

const Spreadsheet = () => (
  <SheetArea>
    <SheetClip>
      <Sheet>
        <colgroup>
          <col width="23" />
          {COLUMNS.map(({ letter, width }) => (
            <col key={letter} width={width} />
          ))}
        </colgroup>
        <thead>
          <tr>
            <ColumnLetter aria-label="Select all" />
            {COLUMNS.map(({ letter }) => (
              <ColumnLetter key={letter} scope="col" $on={letter === "T"}>{letter}</ColumnLetter>
            ))}
          </tr>
        </thead>
        <tbody>
          <HeaderRow />
          {EMPLOYEES.map((data, i) => (
            <EmployeeRow key={i} row={i + 2} data={data} selected={i + 2 === 19} />
          ))}
          <tr>
            <RowNumber />
            {COLUMNS.map(({ letter, title }) =>
              title ? (
                <Cell key={letter} $stripe $good={letter === "L"} />
              ) : (
                <EmptyCell key={letter} />
              )
            )}
          </tr>
        </tbody>
      </Sheet>
    </SheetClip>
    <VScroll>
      <Svg w={8} h={8} stroke="none"><path d="M4 1l4 6H0z" fill="#6a6d70" /></Svg>
      <i />
      <Svg w={8} h={8} stroke="none"><path d="M0 1h8L4 7z" fill="#6a6d70" /></Svg>
    </VScroll>
  </SheetArea>
);

const ExcelWindow = () => {
  const [tab, setTab] = useState("Home");

  return (
    <Workbook>
      <TitleBar>
        <FileGroup>
          <ExcelLogo />
          <FileName type="button">
            sample_data <ChevronDown size={11} strokeWidth={2} />
          </FileName>
        </FileGroup>
        <SearchBox>
          <Svg w={14} h={14}>
            <circle cx="8.500" cy="5.500" r="4.500" />
            <path d="M5.500 9L1 13.500" />
          </Svg>
          <input type="text" placeholder="Search" aria-label="Search" />
        </SearchBox>
        <WindowButtons>
          <button type="button" aria-label="Account">
            <Avatar>
              <Svg w={13} h={14}>
                <circle cx="6.500" cy="5" r="3" />
                <path d="M2 13c0-6 9-6 9 0" />
              </Svg>
            </Avatar>
          </button>
          <button type="button" aria-label="Minimize"><Minus size={13} strokeWidth={2} /></button>
          <button type="button" aria-label="Maximize"><Square size={12} strokeWidth={2} /></button>
          <button type="button" aria-label="Close"><X size={16} strokeWidth={2} /></button>
        </WindowButtons>
      </TitleBar>

      <TabBar>
        {TABS.map((name) => (
          <Tab key={name} type="button" $active={tab === name} onClick={() => setTab(name)}>
            {name}
          </Tab>
        ))}
        <TabActions>
          <ActionButton type="button">
            <Svg w={11} h={11}><path d="M.5.500h10v7H5l-3 3v-3H.5z" /></Svg>
            Comments
          </ActionButton>
          <ActionButton type="button" $primary>
            <Svg w={11} h={11} stroke="#cfeadb">
              <path d="M4 3.500H1v7h8V8M3.500 7.500c0-3 2-4 4-4V1L10.500 4.500 7.500 7V5" />
            </Svg>
            Share
            <Chev size={8} />
          </ActionButton>
        </TabActions>
      </TabBar>

      <RibbonBar />

      <FormulaRow>
        <NameBox>
          <input type="text" defaultValue="T19" aria-label="Name box" />
          <button type="button" aria-label="Name list"><ChevronDown size={12} strokeWidth={2} /></button>
        </NameBox>
        <Dots>⋮</Dots>
        <FxButtons>
          <button type="button" aria-label="Cancel"><X size={14} strokeWidth={2} /></button>
          <button type="button" aria-label="Enter"><Check size={14} strokeWidth={2} /></button>
          <button type="button" className="fx">fx</button>
          <button type="button" aria-label="Function list"><ChevronDown size={10} strokeWidth={2} /></button>
        </FxButtons>
        <FormulaBox>
          <textarea aria-label="Formula" />
          <button type="button" aria-label="Collapse formula bar"><ChevronUp size={12} strokeWidth={2} /></button>
        </FormulaBox>
      </FormulaRow>

      <Spreadsheet />

      <SheetTabs>
        <SheetNav>
          <button type="button" aria-label="Previous sheet"><ChevronLeft size={14} strokeWidth={2} /></button>
          <button type="button" aria-label="Next sheet"><ChevronRight size={14} strokeWidth={2} /></button>
        </SheetNav>
        <SheetTab type="button"><span>Raw Data</span></SheetTab>
        <AddSheet type="button" aria-label="New sheet"><Plus size={14} strokeWidth={2} /></AddSheet>
        <HScroll>
          <Dots>⋮</Dots>
          <Svg w={7} h={9} stroke="none"><path d="M7 0v9L0 4.500z" fill="#6a6d70" /></Svg>
          <b />
          <Svg w={7} h={9} stroke="none"><path d="M0 0v9l7-4.500z" fill="#6a6d70" /></Svg>
        </HScroll>
      </SheetTabs>

      <StatusBar>
        Ready
        <span className="access">
          <Svg w={13} h={12}>
            <circle cx="5" cy="2" r="1.500" />
            <path d="M1 3.500l3 1.500v3l-2 3.500M9 3.500L6 5v2M7 9l2 2 4-4" />
          </Svg>
          Accessibility: Good to go
        </span>
        <ViewButton type="button" aria-label="Normal view" $on>
          <Svg w={13} h={13}><path d="M.5.500h12v12H.5zM.5 4.500h12M.5 8.500h12M4.500.500v12M8.500.500v12" stroke="#444" /></Svg>
        </ViewButton>
        <ViewButton type="button" aria-label="Page layout view">
          <Svg w={13} h={13}><path d="M.5.500h12v12H.5zM3.500 2.500h6v8h-6zM5 5h3M5 7h3M5 9h3" stroke="#444" /></Svg>
        </ViewButton>
        <ViewButton type="button" aria-label="Page break view">
          <Svg w={13} h={13}><path d="M.5.500h12v12H.5zM3.500.500v7h6v-7M6.500.500v4" stroke="#444" /></Svg>
        </ViewButton>
        <Zoom>
          <Minus size={9} strokeWidth={2} />
          <input type="range" min="0" max="200" defaultValue="100" aria-label="Zoom" />
          <Plus size={9} strokeWidth={2} />
        </Zoom>
        100%
      </StatusBar>
    </Workbook>
  );
};

const EditedFile = () => (
  <>
    <PenBadge><Pencil size={9} strokeWidth={2} /></PenBadge>
    <EditLabel>
      Edited
      <SheetFileIcon />
      sample_data.xlsx
    </EditLabel>
  </>
);

const ToolCall = ({ children }) => (
  <FeedItem type="button">
    <span>{children}</span>
    <ChevronRight size={10} strokeWidth={2} />
  </FeedItem>
);

const StepDone = ({ children }) => (
  <FeedItem type="button" $tall>
    {children}
    <CircleCheck size={14} strokeWidth={2} color="#979b98" />
  </FeedItem>
);

const AssistantPanel = () => (
  <Panel>
    <PanelBar>
      <PanelTools>
        <button type="button" aria-label="Menu">
          <Svg w={13} h={13}><path d="M0 1.500h13M0 4.500h13M0 8.500h13M0 11.500h13" /></Svg>
        </button>
        <button type="button" aria-label="Back"><ArrowLeft size={14} strokeWidth={2} /></button>
        <button type="button" aria-label="Forward"><ArrowRight size={14} strokeWidth={2} color="#dcdedc" /></button>
      </PanelTools>
      <Brand>
        <CicelyMark />
        Cicely AI
      </Brand>
      <PanelWindowButtons>
        <button type="button" aria-label="Toggle sidebar">
          <Svg w={14} h={14} stroke="#7b7f7c"><path d="M.5.500h13v13H.5zM9.500.500v13" /></Svg>
        </button>
        <button type="button" aria-label="Minimize"><Minus size={13} strokeWidth={2} /></button>
        <button type="button" aria-label="Maximize"><Square size={13} strokeWidth={2} /></button>
        <button type="button" aria-label="Close"><X size={15} strokeWidth={2} /></button>
      </PanelWindowButtons>
      <RecordDot />
      <PanelScroll />
    </PanelBar>

    <TaskCard>
      <Prompt>Perfectly clean and format the data sheet. Do your best.</Prompt>
      <StepRow type="button">
        <Svg w={18} h={18} strokeWidth="3">
          <circle cx="9" cy="9" r="7" stroke="#d3d8d5" />
          <path d="M4 4a7 7 0 1 0 9-1" stroke="#8d9591" />
        </Svg>
        Step 5: Final autofit and verification
        <span className="count">4/5</span>
        <ChevronDown size={11} strokeWidth={2} />
      </StepRow>
    </TaskCard>

    <Feed>
      <ToolCall>Explored <strong>1</strong> sheet</ToolCall>
      <ToolCall>Edited Excel Workbook</ToolCall>
      <ToolCall>Explored <strong>1</strong> sheet</ToolCall>
      <ToolCall>Edited Excel Workbook</ToolCall>
      <StepDone>Completed Step 2 · Started Step 3</StepDone>
      <ToolCall>Edited Excel Workbook</ToolCall>
      <StepDone>Completed Step 3 · Started Step 4</StepDone>
      <Message>Now the fun part — professional formatting.</Message>
      <FeedItem type="button">
        Editing Excel Workbook
        <Chev />
      </FeedItem>

      <EditBlock>
        <FadedCard>
          <ol>
            <li><span>1.</span>Dark header with white bold text</li>
            <li><span>2.</span>Alternating grey/white row stripes</li>
          </ol>
        </FadedCard>
      </EditBlock>
      <EditBlock>
        <EditedFile />
        <Rail />
        <EditCard>
          <h3>Apply number formats, alignment, borders, conditional formatting</h3>
          <ol>
            {FORMAT_STEPS.map((step, i) => (
              <li key={step}><span>{i + 1}.</span>{step}</li>
            ))}
          </ol>
        </EditCard>
      </EditBlock>
      <EditBlock>
        <EditedFile />
        <EditCard>
          <h3>Autofit all columns to content</h3>
        </EditCard>
      </EditBlock>

      <StepDone>Completed Step 4 · Started Step 5</StepDone>
      <Thinking><CicelyMark w={26} h={20} open /></Thinking>
    </Feed>

    <Composer>
      <Context>
        You're looking at:
        <div>
          <SheetFileIcon />
          sample_data.xlsx
          <span className="pill">Selected : <strong>Raw Data · T19</strong></span>
        </div>
      </Context>
      <ReplyCard>
        <textarea placeholder="Reply..." aria-label="Reply" />
        <ReplyTools>
          <RoundButton type="button" aria-label="Attach file">
            <Paperclip size={15} strokeWidth={2} />
          </RoundButton>
          <ModeButton type="button">
            <ChevronsRight size={12} strokeWidth={2} />
            Accept all edits
            <ChevronDown size={12} strokeWidth={2} />
          </ModeButton>
          <ModeButton type="button" $push>
            <Svg w={11} h={11} stroke="#d3d5d3" strokeWidth="2">
              <path d="M5.500 0v11M0 5.500h11M2 2l7 7M9 2L2 9" />
            </Svg>
            Opus 4.6
            <ChevronDown size={12} strokeWidth={2} />
          </ModeButton>
          <RoundButton type="button" aria-label="Stop" $dark><i /></RoundButton>
        </ReplyTools>
      </ReplyCard>
    </Composer>
  </Panel>
);

const App = () => (
  <>
    <GlobalStyle />
    <Desktop>
      <ExcelWindow />
      <AssistantPanel />
    </Desktop>
  </>
);

export default App;
